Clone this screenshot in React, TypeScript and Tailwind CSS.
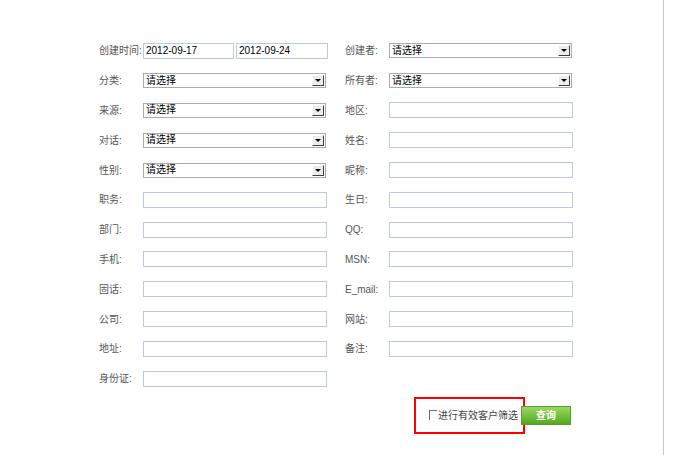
import React from 'react';

type Field = { label: string; kind: 'select' | 'input' | 'date' | 'none' };

const rows: [Field, Field][] = [
  [{ label: '创建时间:', kind: 'date' }, { label: '创建者:', kind: 'select' }],
  [{ label: '分类:', kind: 'select' }, { label: '所有者:', kind: 'select' }],
  [{ label: '来源:', kind: 'select' }, { label: '地区:', kind: 'input' }],
  [{ label: '对话:', kind: 'select' }, { label: '姓名:', kind: 'input' }],
  [{ label: '性别:', kind: 'select' }, { label: '昵称:', kind: 'input' }],
  [{ label: '职务:', kind: 'input' }, { label: '生日:', kind: 'input' }],
  [{ label: '部门:', kind: 'input' }, { label: 'QQ:', kind: 'input' }],
  [{ label: '手机:', kind: 'input' }, { label: 'MSN:', kind: 'input' }],
  [{ label: '固话:', kind: 'input' }, { label: 'E_mail:', kind: 'input' }],
  [{ label: '公司:', kind: 'input' }, { label: '网站:', kind: 'input' }],
  [{ label: '地址:', kind: 'input' }, { label: '备注:', kind: 'input' }],
  [{ label: '身份证:', kind: 'input' }, { label: '', kind: 'none' }],
];

const SelectBox = ({ w }: { w: string }) => (
  <div className={`${w} h-[15px] flex items-center border border-[#a5acb5] bg-white`}>
    <span className="flex-1 pl-[2px] text-[10px] leading-none text-black">请选择</span>
    <span className="w-[12px] h-[11px] mr-[1px] flex items-center justify-center bg-[#ececec] border border-t-white border-l-white border-r-[#404040] border-b-[#404040]">
      <span className="w-0 h-0 border-l-[3px] border-r-[3px] border-t-[3px] border-l-transparent border-r-transparent border-t-black" />
    </span>
  </div>
);

const TextBox = ({ w, value }: { w: string; value?: string }) => (
  <div className={`${w} h-[16px] flex items-center border border-[#bccbdc] bg-white pl-[2px] text-[10px] text-black`}>
    {value}
  </div>
);

const Cell = ({ f }: { f: Field }) => (
  <div className="flex items-center">
    <span className="w-[44px] text-[10px] text-[#555] whitespace-nowrap">{f.label}</span>
    {f.kind === 'date' && (
      <div className="flex gap-[2px]">
        <TextBox w="w-[91px]" value="2012-09-17" />
        <TextBox w="w-[92px]" value="2012-09-24" />
      </div>
    )}
    {f.kind === 'select' && <SelectBox w="w-[183px]" />}
    {f.kind === 'input' && <TextBox w="w-[184px]" />}
  </div>
);

export default function App() {
  return (
    <div
      className="w-[674px] h-[455px] bg-white flex"
      style={{ fontFamily: '"Liberation Sans", "Noto Sans CJK SC", sans-serif' }}
    >
      <div className="w-[663px] pt-[36px] pl-[99px]">
        <div className="grid grid-cols-[246px_228px] auto-rows-[29.8px]">
          {rows.map((r, i) => (
            <React.Fragment key={i}>
              <Cell f={r[0]} />
              {r[1].kind === 'none' ? <div /> : <Cell f={r[1]} />}
            </React.Fragment>
          ))}
        </div>
        <div className="flex items-center justify-end w-[472px] mt-[3px]">
          <div className="w-[111px] h-[37px] border-2 border-[#ff0000] flex items-center justify-end pr-[5px]">
            <span className="w-[8px] h-[10px] border-t border-l border-[#6d6d6d] mr-[1px]" />
            <span className="text-[10px] text-[#444]">进行有效客户筛选</span>
          </div>
          <button className="ml-[-4px] w-[50px] h-[19px] border border-[#5a9e2c] bg-gradient-to-b from-[#9ad95f] to-[#53a820] text-white text-[10px] font-bold flex items-center justify-center">
            查询
          </button>
        </div>
      </div>
      <div className="w-[1px] h-full bg-[#c8c8c8]" />
    </div>
  );
}
